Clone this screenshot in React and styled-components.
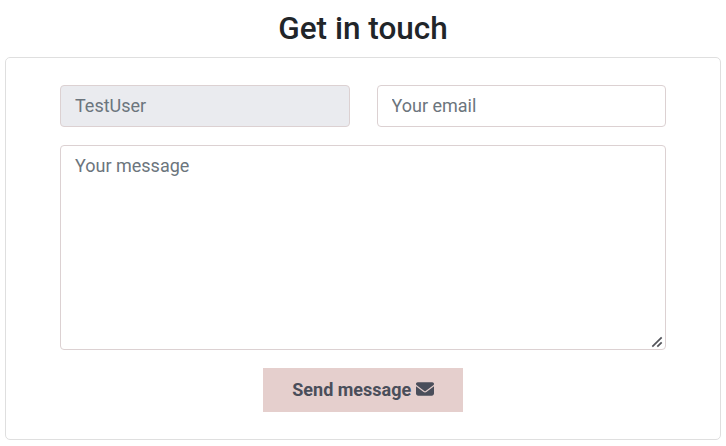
import React from "react";
import styled, { createGlobalStyle } from "styled-components";
import { FaEnvelope } from "react-icons/fa6";

const GlobalStyle = createGlobalStyle`
  *, *::before, *::after { box-sizing: border-box; }
  body {
    margin: 0;
    background: #fff;
    color: #212529;
    font: 400 18px/27px Roboto, sans-serif;
  }
`;

const Page = styled.main`
  height: 446px;
  padding: 9px 5px 0;
  overflow: hidden;
`;

const Title = styled.h2`
  margin: 0 0 8px;
  text-align: center;
  font-size: 31.5px;
  font-weight: 500;
  line-height: 40px;
`;

const Card = styled.form`
  display: flex;
  flex-direction: column;
  gap: 18px;
  width: 716px;
  height: 383px;
  padding: 27px 54px 0;
  border: 1px solid #dfdfdf;
  border-radius: 5px;
`;

const Row = styled.div`
  display: grid;
  grid-template-columns: 290px 289px;
  gap: 27px;
`;

const Field = styled.input`
  display: block;
  width: 100%;
  height: ${(p) => (p.$tall ? "205px" : "42px")};
  margin: 0;
  padding: ${(p) => (p.$tall ? "6px 14px" : "5px 14px 7px")};
  border: 1px solid #dcd1d2;
  border-radius: 4px;
  outline: 0;
  resize: none;
  background: #fff;
  color: #6c757d;
  font: inherit;
  &::placeholder { color: #6c757d; opacity: 1; }
  &:disabled { background: #eaebef; }
  &[type="email"] { padding-left: 13.5px; }
`;

const MessageBox = styled.div`
  position: relative;
  height: 205px;
`;

const Grip = styled.svg`
  position: absolute;
  right: 3px;
  bottom: 2px;
  width: 12px;
  height: 12px;
  pointer-events: none;
`;

const SendButton = styled.button`
  display: flex;
  align-items: center;
  justify-content: center;
  gap: 4.5px;
  align-self: center;
  width: 200px;
  height: 44px;
  padding: 0;
  border: 0;
  background: #e5cfcd;
  color: #4a4e5a;
  font: inherit;
  font-weight: 700;
  white-space: nowrap;
`;

const Label = styled.span`
  padding-bottom: 2px;
`;

const MailIcon = styled(FaEnvelope)`
  margin-bottom: 2px;
`;

export default function App() {
  return (
    <>
      <GlobalStyle />
      <Page>
        <Title>Get in touch</Title>
        <Card>
          <Row>
            <Field placeholder="TestUser" disabled />
            <Field type="email" placeholder="Your email" />
          </Row>
          <MessageBox>
            <Field as="textarea" $tall placeholder="Your message" />
            <Grip viewBox="0 0 12 12" stroke="#53545a" strokeWidth="1.7">
              <path d="M1.3 10.7 10.7 1.3M6.3 10.7 10.7 6.3" />
            </Grip>
          </MessageBox>
          <SendButton type="button">
            <Label>Send message</Label>
            <MailIcon size={18} />
          </SendButton>
        </Card>
      </Page>
    </>
  );
}
